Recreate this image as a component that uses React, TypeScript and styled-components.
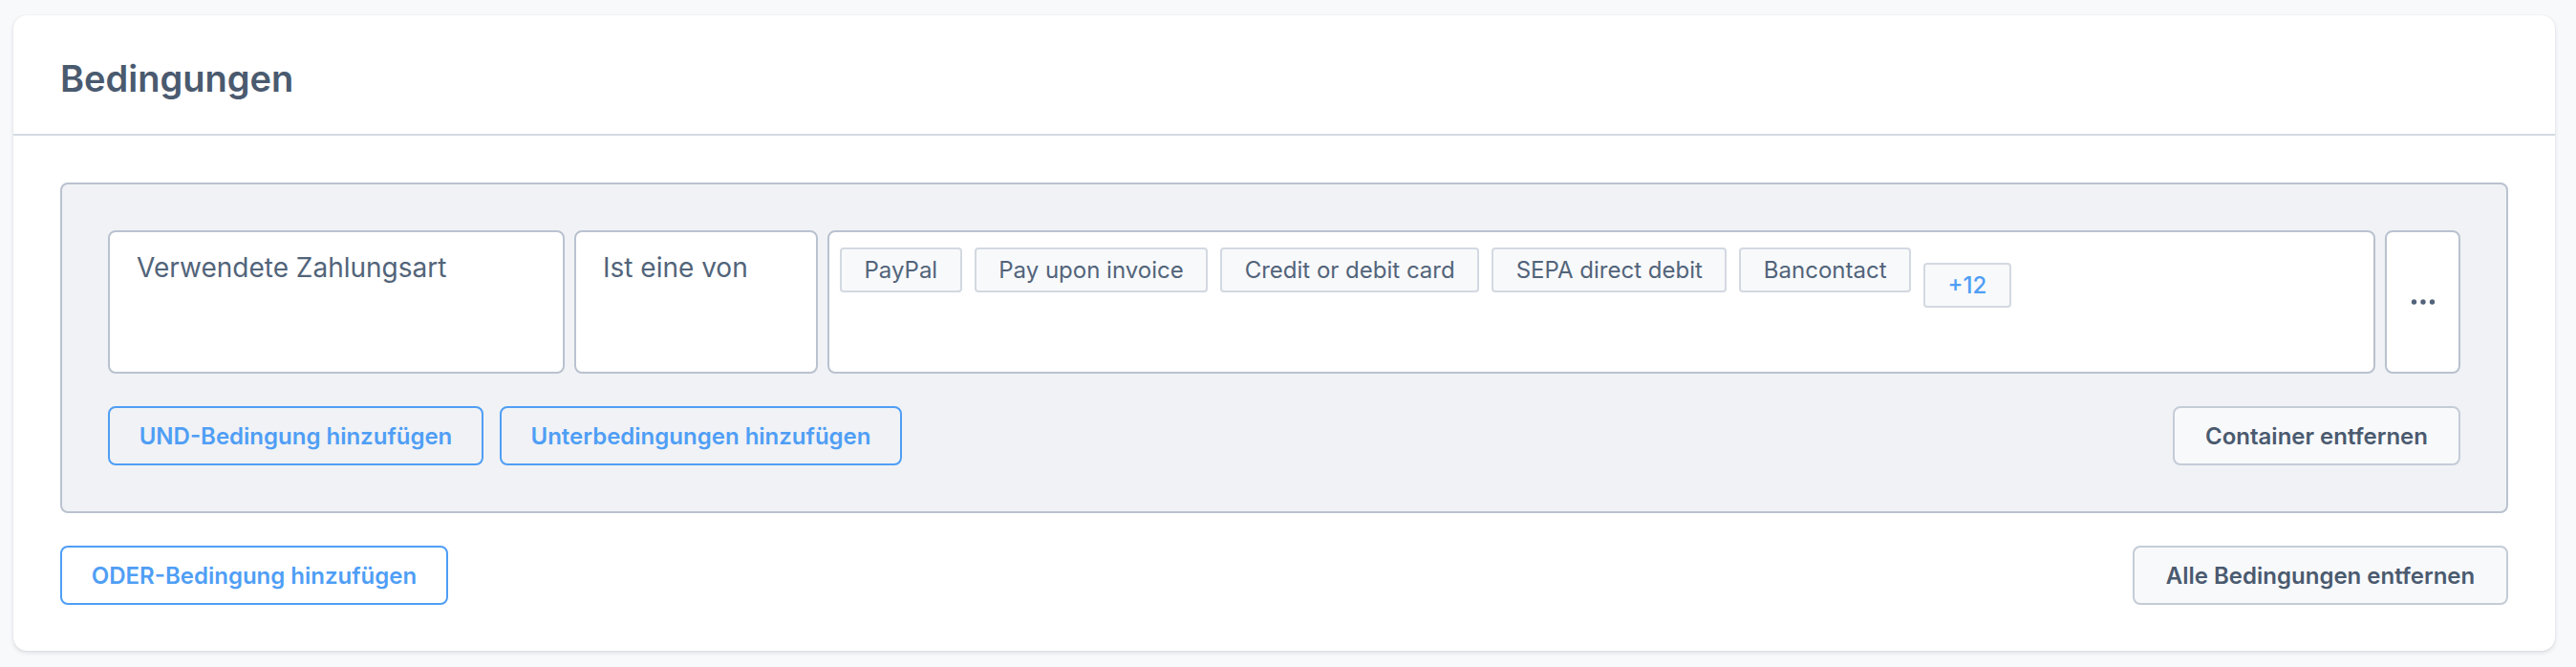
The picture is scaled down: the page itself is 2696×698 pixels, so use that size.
import React from "react";
import styled, { createGlobalStyle } from "styled-components";

const GlobalStyle = createGlobalStyle`
  * { box-sizing: border-box; }
  html, body { margin: 0; padding: 0; background: #f8f9fb; }
  body { font-family: Inter, "Noto Sans", sans-serif; }
`;

const Page = styled.div`
  padding: 16px 22px 16px 14px;
`;

const Card = styled.section`
  background: #ffffff;
  border-radius: 14px;
  box-shadow: 0 2px 4px rgba(40, 50, 70, 0.14), 0 0 1px rgba(40, 50, 70, 0.12);
`;

const CardHeader = styled.header`
  padding: 43px 49px 35px;
  border-bottom: 2px solid #d4dae2;
`;

const Title = styled.h2`
  margin: 0;
  font-size: 38px;
  line-height: 46px;
  font-weight: 600;
  color: #4a5a6f;
`;

const CardBody = styled.div`
  padding: 49px 49px 48px;
  display: flex;
  flex-direction: column;
  gap: 34px;
`;

const Container = styled.div`
  background: #f0f2f5;
  border: 2px solid #b9c2cf;
  border-radius: 8px;
  padding: 48px;
  display: flex;
  flex-direction: column;
  gap: 34px;
`;

const FieldRow = styled.div`
  display: flex;
  gap: 10px;
  height: 150px;
`;

const Field = styled.div<{ $width?: number }>`
  flex: ${(p) => (p.$width ? `0 0 ${p.$width}px` : "1 1 auto")};
  background: #ffffff;
  border: 2px solid #b9c2cf;
  border-radius: 8px;
  padding: 17px 28px;
  font-size: 28px;
  line-height: 40px;
  color: #52647a;
`;

const TagField = styled.div`
  flex: 1 1 auto;
  background: #ffffff;
  border: 2px solid #b9c2cf;
  border-radius: 8px;
  padding: 16px 11px;
  display: flex;
  align-items: flex-start;
  gap: 13px;
`;

const Tag = styled.span<{ $more?: boolean }>`
  display: inline-flex;
  align-items: center;
  height: 47px;
  padding: 0 23.5px;
  background: #f8f9fb;
  border: 2px solid #d3d9e1;
  border-radius: 4px;
  font-size: 24px;
  font-weight: ${(p) => (p.$more ? 500 : 400)};
  color: ${(p) => (p.$more ? "#4f9ef5" : "#52647a")};
  margin-top: ${(p) => (p.$more ? "16px" : "0")};
  white-space: nowrap;
`;

const MenuButton = styled.button`
  flex: 0 0 79px;
  background: #ffffff;
  border: 2px solid #b9c2cf;
  border-radius: 8px;
  padding: 0;
  display: flex;
  align-items: center;
  justify-content: center;
  cursor: pointer;
`;

const ButtonRow = styled.div`
  display: flex;
  gap: 17px;
  align-items: center;
`;

const Spacer = styled.div`
  flex: 1 1 auto;
`;

const Button = styled.button<{ $variant: "primary" | "neutral"; $width: number }>`
  height: 62px;
  width: ${(p) => p.$width}px;
  padding: 0;
  border-radius: 8px;
  font-family: Inter, "Noto Sans", sans-serif;
  font-size: 24px;
  font-weight: 600;
  cursor: pointer;
  white-space: nowrap;
  border: 2px solid ${(p) => (p.$variant === "primary" ? "#4f9ef5" : "#c4ccd7")};
  color: ${(p) => (p.$variant === "primary" ? "#4f9ef5" : "#4a5a6f")};
  background: ${(p) => (p.$variant === "primary" ? "transparent" : "#f8f9fb")};
`;

const Dots = () => (
  <svg width="28" height="8" viewBox="0 0 28 8" aria-hidden="true">
    <circle cx="4.5" cy="4" r="2.7" fill="#52647a" />
    <circle cx="14" cy="4" r="2.7" fill="#52647a" />
    <circle cx="23.5" cy="4" r="2.7" fill="#52647a" />
  </svg>
);

const tags = ["PayPal", "Pay upon invoice", "Credit or debit card", "SEPA direct debit", "Bancontact"];

export default function App() {
  return (
    <>
      <GlobalStyle />
      <Page>
        <Card>
          <CardHeader>
            <Title>Bedingungen</Title>
          </CardHeader>
          <CardBody>
            <Container>
              <FieldRow>
                <Field $width={478}>Verwendete Zahlungsart</Field>
                <Field $width={255}>Ist eine von</Field>
                <TagField>
                  {tags.map((t) => (
                    <Tag key={t}>{t}</Tag>
                  ))}
                  <Tag $more>+12</Tag>
                </TagField>
                <MenuButton aria-label="Mehr">
                  <Dots />
                </MenuButton>
              </FieldRow>
              <ButtonRow>
                <Button $variant="primary" $width={393}>UND-Bedingung hinzufügen</Button>
                <Button $variant="primary" $width={421}>Unterbedingungen hinzufügen</Button>
                <Spacer />
                <Button $variant="neutral" $width={301}>Container entfernen</Button>
              </ButtonRow>
            </Container>
            <ButtonRow>
              <Button $variant="primary" $width={406}>ODER-Bedingung hinzufügen</Button>
              <Spacer />
              <Button $variant="neutral" $width={393}>Alle Bedingungen entfernen</Button>
            </ButtonRow>
          </CardBody>
        </Card>
      </Page>
    </>
  );
}
